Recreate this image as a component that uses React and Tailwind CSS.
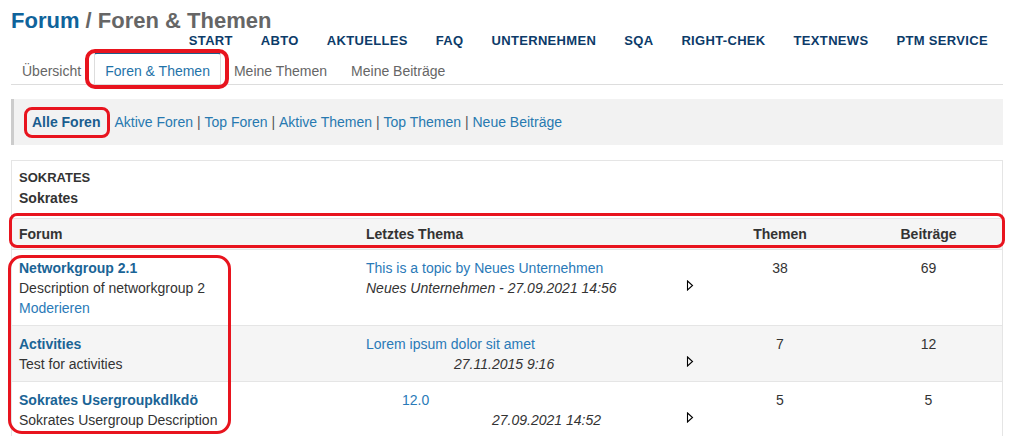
import React from "react";

const Tri = () => (
  <svg width="8" height="11" viewBox="0 0 8 11" className="mt-[22px] mr-[11px] shrink-0">
    <polygon points="1.5,1 6.5,5.5 1.5,10" fill="none" stroke="#000" strokeWidth="1.1" />
  </svg>
);

const navItems = ["START", "ABTO", "AKTUELLES", "FAQ", "UNTERNEHMEN", "SQA", "RIGHT-CHEK", "TEXTNEWS", "PTM SERVICE"];

export default function App() {
  return (
    <div className="relative w-[1009px] h-[436px] overflow-hidden bg-white font-['Liberation_Sans',Arial,sans-serif] text-[#333]">
      <div className="pl-[11px] pr-[6px]">
        <h1 className="pt-[9px] text-[22px] leading-[24px] font-bold">
          <span className="text-[#0f639b]">Forum</span>
          <span className="text-[#666]"> / Foren &amp; Themen</span>
        </h1>
        <nav className="flex justify-end gap-[28px] pr-[15px] text-[13px] leading-[16px] font-bold tracking-[0.33px] text-[#0c3b69]">
          {navItems.map((n) => (
            <span key={n}>{n}</span>
          ))}
        </nav>
        <div className="mt-[3px] flex border-b border-[#ddd] text-[14px] leading-[20px]">
          <span className="mr-[2px] px-[10px] pt-[7px] pb-[3px] border-t-2 border-x border-transparent text-[#666]">Übersicht</span>
          <span className="mr-[2px] px-[10px] pt-[7px] pb-[3px] border-t-2 border-x border-t-[#1b5f8c] border-x-[#ddd] rounded-t-[3px] bg-white text-[#1f73a9]">Foren &amp; Themen</span>
          <span className="mr-[2px] px-[10px] pt-[7px] pb-[3px] border-t-2 border-x border-transparent text-[#666]">Meine Themen</span>
          <span className="mr-[2px] px-[10px] pt-[7px] pb-[3px] border-t-2 border-x border-transparent text-[#666]">Meine Beiträge</span>
        </div>
        <div className="mt-[14px] h-[46px] flex items-center bg-[#f2f2f2] border-l-[3px] border-[#ccc] pl-[18px] text-[14px] text-[#555]">
          <span className="font-bold text-[#1a5d8f] mr-[14px]">Alle Foren</span>
          <span className="text-[#2779b0]">Aktive Foren</span>
          <span>&nbsp;|&nbsp;</span>
          <span className="text-[#2779b0]">Top Foren</span>
          <span>&nbsp;|&nbsp;</span>
          <span className="text-[#2779b0]">Aktive Themen</span>
          <span>&nbsp;|&nbsp;</span>
          <span className="text-[#2779b0]">Top Themen</span>
          <span>&nbsp;|&nbsp;</span>
          <span className="text-[#2779b0]">Neue Beiträge</span>
        </div>
        <div className="mt-[15px] border border-[#e5e5e5] h-[400px]">
          <div className="pt-[6px] px-[7px] pb-[9px] font-bold">
            <div className="text-[13px] leading-[21px]">SOKRATES</div>
            <div className="text-[14px] leading-[21px]">Sokrates</div>
          </div>
          <div className="grid grid-cols-[346px_347px_150px_1fr] h-[31px] items-center bg-[#f5f5f5] border-t border-[#e5e5e5] font-bold text-[14px]">
            <div className="pl-[7px]">Forum</div>
            <div className="pl-[8px]">Letztes Thema</div>
            <div className="text-center">Themen</div>
            <div className="text-center">Beiträge</div>
          </div>
          <div className="grid grid-cols-[346px_347px_150px_1fr] border-t border-[#e5e5e5] text-[14px] leading-[20px]">
            <div className="pl-[7px] pt-[8px] pb-[7px]">
              <div className="font-bold text-[#1a6496]">Networkgroup 2.1</div>
              <div>Description of networkgroup 2</div>
              <div className="text-[#2a7ab8]">Moderieren</div>
            </div>
            <div className="flex pt-[8px] pb-[7px]">
              <div className="flex-1 pl-[8px]">
                <div className="text-[#2a7ab8]">This is a topic by Neues Unternehmen</div>
                <div className="italic">Neues Unternehmen - 27.09.2021 14:56</div>
              </div>
              <Tri />
            </div>
            <div className="pt-[8px] pb-[7px] text-center">38</div>
            <div className="pt-[8px] pb-[7px] text-center">69</div>
          </div>
          <div className="grid grid-cols-[346px_347px_150px_1fr] border-t border-[#e5e5e5] bg-[#f5f5f5] text-[14px] leading-[20px]">
            <div className="pl-[7px] pt-[8px] pb-[7px]">
              <div className="font-bold text-[#1a6496]">Activities</div>
              <div>Test for activities</div>
            </div>
            <div className="flex pt-[8px] pb-[7px]">
              <div className="flex-1 pl-[8px]">
                <div className="text-[#2a7ab8]">Lorem ipsum dolor sit amet</div>
                <div className="italic ml-[88px]">27.11.2015 9:16</div>
              </div>
              <Tri />
            </div>
            <div className="pt-[8px] pb-[7px] text-center">7</div>
            <div className="pt-[8px] pb-[7px] text-center">12</div>
          </div>
          <div className="grid grid-cols-[346px_347px_150px_1fr] border-t border-[#e5e5e5] text-[14px] leading-[20px]">
            <div className="pl-[7px] pt-[8px] pb-[7px]">
              <div className="font-bold text-[#1a6496]">Sokrates Usergroupkdlkdö</div>
              <div>Sokrates Usergroup Description</div>
            </div>
            <div className="flex pt-[8px] pb-[7px]">
              <div className="flex-1 pl-[8px]">
                <div className="text-[#2a7ab8] ml-[36px]">12.0</div>
                <div className="italic ml-[126px]">27.09.2021 14:52</div>
              </div>
              <Tri />
            </div>
            <div className="pt-[8px] pb-[7px] text-center">5</div>
            <div className="pt-[8px] pb-[7px] text-center">5</div>
          </div>
        </div>
      </div>

      {/* red annotation outlines */}
      <div className="absolute left-[85px] top-[49px] w-[144px] h-[40px] border-[4px] border-[#e8141e] rounded-[10px] pointer-events-none" />
      <div className="absolute left-[24px] top-[107px] w-[86px] h-[31px] border-[3px] border-[#e8141e] rounded-[8px] pointer-events-none" />
      <div className="absolute left-[9px] top-[213px] w-[996px] h-[35px] border-[3px] border-[#e8141e] rounded-[8px] pointer-events-none" />
      <div className="absolute left-[8px] top-[255px] w-[223px] h-[179px] border-[3px] border-[#e8141e] rounded-[14px] pointer-events-none" />
    </div>
  );
}
